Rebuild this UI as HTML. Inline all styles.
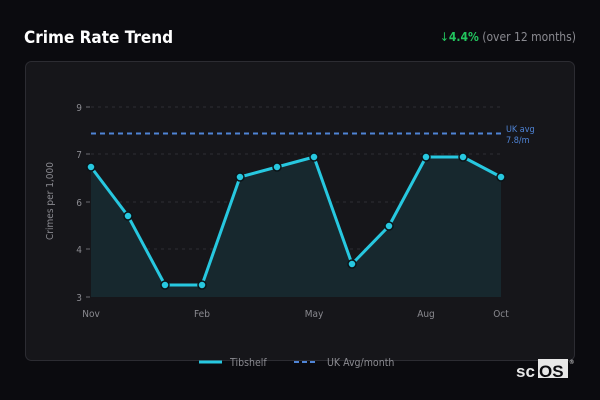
<!DOCTYPE html>
<html><head><meta charset="utf-8"><style>
html,body{margin:0;padding:0;background:#0b0b0f;width:600px;height:400px;overflow:hidden;}
svg text{font-family:"DejaVu Sans Condensed","DejaVu Sans","Liberation Sans",sans-serif;}
</style></head><body>
<svg width="600" height="400" viewBox="0 0 600 400" xmlns="http://www.w3.org/2000/svg">
<rect x="0" y="0" width="600" height="400" fill="#0b0b0f"/>
<text x="24" y="43" fill="#ffffff" font-size="17" font-weight="bold">Crime Rate Trend</text>
<text x="576" y="41" text-anchor="end" font-size="12"><tspan fill="#22c55e">↓</tspan><tspan fill="#22c55e" font-weight="bold">4.4%</tspan><tspan fill="#8a8a90"> (over 12 months)</tspan></text>
<rect x="25.5" y="61.5" width="549" height="299" rx="6" fill="#16161a" stroke="#2c2c32"/>
<g stroke="#2e2e34" stroke-dasharray="3,4" stroke-width="1">
<line x1="91" y1="107" x2="501" y2="107"/><line x1="91" y1="154" x2="501" y2="154"/><line x1="91" y1="202" x2="501" y2="202"/><line x1="91" y1="249" x2="501" y2="249"/>
</g>
<g stroke="#6a6a70"><line x1="86" y1="107" x2="90" y2="107"/><line x1="86" y1="154" x2="90" y2="154"/><line x1="86" y1="202" x2="90" y2="202"/><line x1="86" y1="249" x2="90" y2="249"/><line x1="86" y1="297" x2="90" y2="297"/></g>
<g fill="#8a8a90" font-size="10" text-anchor="end"><text x="82" y="111">9</text><text x="82" y="158">7</text><text x="82" y="206">6</text><text x="82" y="253">4</text><text x="82" y="301">3</text></g>
<text transform="translate(53,201) rotate(-90)" text-anchor="middle" fill="#8a8a90" font-size="10">Crimes per 1,000</text>
<polygon fill="#17282e" points="91,167 128,216 165,285 202,285 240,177 277,167 314,157 352,264 389,226 426,157 463,157 501,177 501,297 91,297"/>
<line x1="91" y1="133.5" x2="501" y2="133.5" stroke="#4f84d6" stroke-width="2" stroke-dasharray="5,4"/>
<text x="506" y="132" fill="#4f84d6" font-size="9">UK avg</text><text x="506" y="143" fill="#4f84d6" font-size="9">7.8/m</text>
<polyline fill="none" stroke="#27c8e0" stroke-width="3" stroke-linejoin="round" points="91,167 128,216 165,285 202,285 240,177 277,167 314,157 352,264 389,226 426,157 463,157 501,177"/>
<g fill="#27c8e0" stroke="#0b1418" stroke-width="1.5">
<circle cx="91" cy="167" r="4"/><circle cx="128" cy="216" r="4"/><circle cx="165" cy="285" r="4"/><circle cx="202" cy="285" r="4"/><circle cx="240" cy="177" r="4"/><circle cx="277" cy="167" r="4"/><circle cx="314" cy="157" r="4"/><circle cx="352" cy="264" r="4"/><circle cx="389" cy="226" r="4"/><circle cx="426" cy="157" r="4"/><circle cx="463" cy="157" r="4"/><circle cx="501" cy="177" r="4"/>
</g>
<g fill="#8a8a90" font-size="10" text-anchor="middle"><text x="91" y="317">Nov</text><text x="202" y="317">Feb</text><text x="314" y="317">May</text><text x="426" y="317">Aug</text><text x="501" y="317">Oct</text></g>
<line x1="199" y1="362" x2="222" y2="362" stroke="#27c8e0" stroke-width="3"/>
<text x="230" y="366" fill="#8a8a90" font-size="10.5">Tibshelf</text>
<line x1="294" y1="362" x2="318" y2="362" stroke="#4f84d6" stroke-width="2" stroke-dasharray="5,3"/>
<text x="327" y="366" fill="#8a8a90" font-size="10.5">UK Avg/month</text>
<rect x="538" y="359" width="30" height="19" fill="#e8e8e8"/>
<text x="516" y="377" fill="#e8e8e8" font-size="17" font-weight="bold" style="font-family:'Liberation Sans',sans-serif">sc</text>
<text x="539" y="377" fill="#0b0b0f" font-size="17" font-weight="bold" style="font-family:'Liberation Sans',sans-serif">OS</text>
<text x="569" y="364" fill="#e8e8e8" font-size="6">®</text>
</svg>
</body></html>
